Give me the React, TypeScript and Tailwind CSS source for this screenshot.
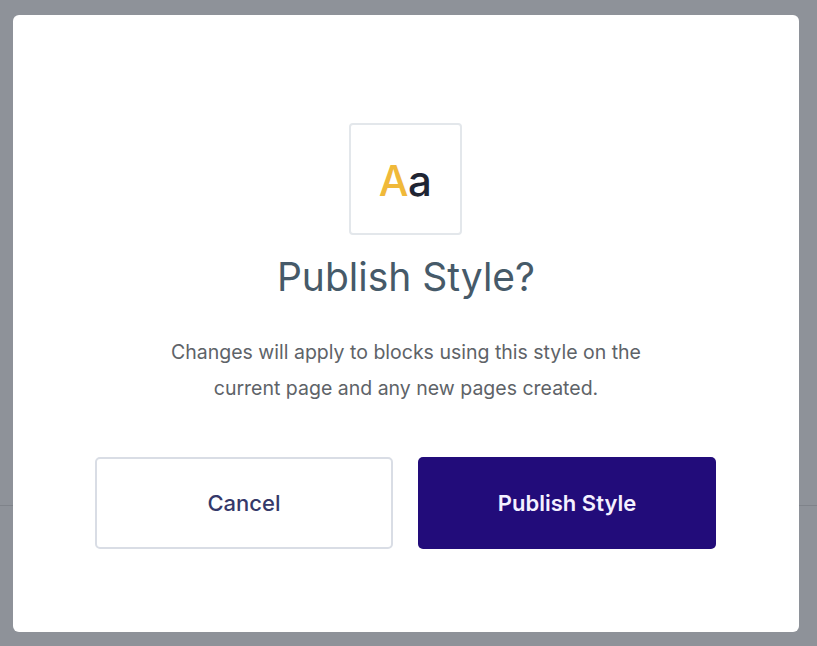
import React from "react";

export default function App() {
  return (
    <div
      className="relative w-[817px] h-[646px] overflow-hidden bg-[#8e9299]"
      style={{ fontFamily: "Inter, 'Noto Sans', sans-serif" }}
    >
      <div className="h-[506px] border-b border-[#7f838a]" />
      <div className="absolute left-[13px] top-[15px] w-[786px] h-[617px] bg-white rounded-[6px] flex flex-col items-center pt-[108px]">
        <div className="w-[113px] h-[112px] -ml-[2px] border-2 border-[#e3e7eb] rounded-[4px] flex items-center justify-center">
          <span className="text-[42px] leading-none font-medium tracking-[-0.5px] mt-[4px]">
            <span className="text-[#f0b93a]">A</span>
            <span className="text-[#1f2533]">a</span>
          </span>
        </div>
        <h1 className="mt-[18px] text-[39px] leading-[48px] font-normal text-[#465a69]">
          Publish Style?
        </h1>
        <p className="mt-[34px] text-[19.5px] leading-[35.5px] text-[#5e6368] text-center w-[560px]">
          Changes will apply to blocks using this style on the
          <br />
          current page and any new pages created.
        </p>
        <div className="mt-[51px] -ml-[1px] flex gap-[25px]">
          <button className="w-[298px] h-[92px] rounded-[5px] border-2 border-[#d9dde5] bg-white text-[22px] font-medium text-[#35396a]">
            Cancel
          </button>
          <button className="w-[298px] h-[92px] rounded-[5px] bg-[#220c7a] text-[22px] font-semibold text-[#f4f1ff]">
            Publish Style
          </button>
        </div>
      </div>
    </div>
  );
}
